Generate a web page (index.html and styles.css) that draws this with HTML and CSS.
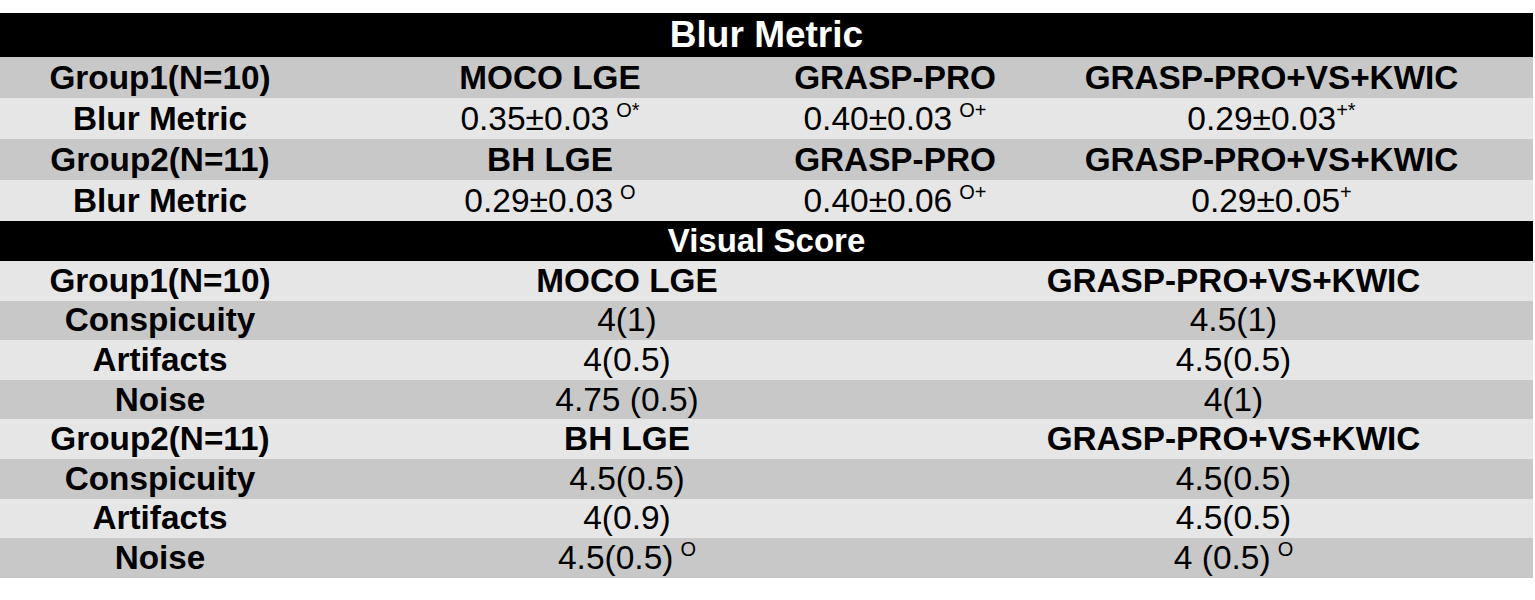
FILE: index.html
```html
<!DOCTYPE html>
<html>
<head>
<meta charset="utf-8">
<link rel="stylesheet" href="styles.css">
</head>
<body>
<div class="sheet">
  <div class="section-title t1">Blur Metric</div>
  <div class="grid four">
    <div class="row dark"><div class="cell b">Group1(N=10)</div><div class="cell b">MOCO LGE</div><div class="cell b">GRASP-PRO</div><div class="cell b">GRASP-PRO+VS+KWIC</div></div>
    <div class="row light"><div class="cell b">Blur Metric</div><div class="cell">0.35±0.03<sup class="sp">O*</sup></div><div class="cell">0.40±0.03<sup class="sp">O+</sup></div><div class="cell">0.29±0.03<sup>+*</sup></div></div>
    <div class="row dark"><div class="cell b">Group2(N=11)</div><div class="cell b">BH LGE</div><div class="cell b">GRASP-PRO</div><div class="cell b">GRASP-PRO+VS+KWIC</div></div>
    <div class="row light"><div class="cell b">Blur Metric</div><div class="cell">0.29±0.03<sup class="sp">O</sup></div><div class="cell">0.40±0.06<sup class="sp">O+</sup></div><div class="cell">0.29±0.05<sup>+</sup></div></div>
  </div>
  <div class="section-title t2">Visual Score</div>
  <div class="grid three">
    <div class="row light"><div class="cell b">Group1(N=10)</div><div class="cell b">MOCO LGE</div><div class="cell b">GRASP-PRO+VS+KWIC</div></div>
    <div class="row dark"><div class="cell b">Conspicuity</div><div class="cell">4(1)</div><div class="cell">4.5(1)</div></div>
    <div class="row light"><div class="cell b">Artifacts</div><div class="cell">4(0.5)</div><div class="cell">4.5(0.5)</div></div>
    <div class="row dark"><div class="cell b">Noise</div><div class="cell">4.75 (0.5)</div><div class="cell">4(1)</div></div>
    <div class="row light"><div class="cell b">Group2(N=11)</div><div class="cell b">BH LGE</div><div class="cell b">GRASP-PRO+VS+KWIC</div></div>
    <div class="row dark"><div class="cell b">Conspicuity</div><div class="cell">4.5(0.5)</div><div class="cell">4.5(0.5)</div></div>
    <div class="row light"><div class="cell b">Artifacts</div><div class="cell">4(0.9)</div><div class="cell">4.5(0.5)</div></div>
    <div class="row dark"><div class="cell b">Noise</div><div class="cell">4.5(0.5)<sup class="sp">O</sup></div><div class="cell">4 (0.5)<sup class="sp">O</sup></div></div>
  </div>
</div>
</body>
</html>
```

FILE: styles.css
```css
html, body {
  margin: 0;
  padding: 0;
  background: #ffffff;
}
body {
  font-family: "Liberation Sans", Arial, sans-serif;
  color: #000;
}
.sheet {
  margin-top: 13px;
  width: 1533px;
}
.section-title {
  background: #000;
  color: #fff;
  font-weight: bold;
  font-size: 33px;
  display: flex;
  align-items: center;
  justify-content: center;
}
.t1 { height: 44px; font-size: 37px; }
.t2 { height: 40px; }
.grid {
  display: flex;
  flex-direction: column;
}
.row {
  display: grid;
  align-items: center;
}
.four .row {
  grid-template-columns: 320px 460px 230px 523px;
  height: 41px;
}
.three .row {
  grid-template-columns: 320px 614px 599px;
  height: 39.6px;
}
.dark { background: #c8c8c8; }
.light { background: #e6e6e6; }
.cell {
  text-align: center;
  font-size: 33.5px;
  line-height: 38px;
  white-space: nowrap;
}
.cell.b {
  font-weight: bold;
  font-size: 33.3px;
}
sup {
  font-size: 20px;
  line-height: 0;
  vertical-align: 13px;
}
sup.sp {
  margin-left: 7px;
}
```
